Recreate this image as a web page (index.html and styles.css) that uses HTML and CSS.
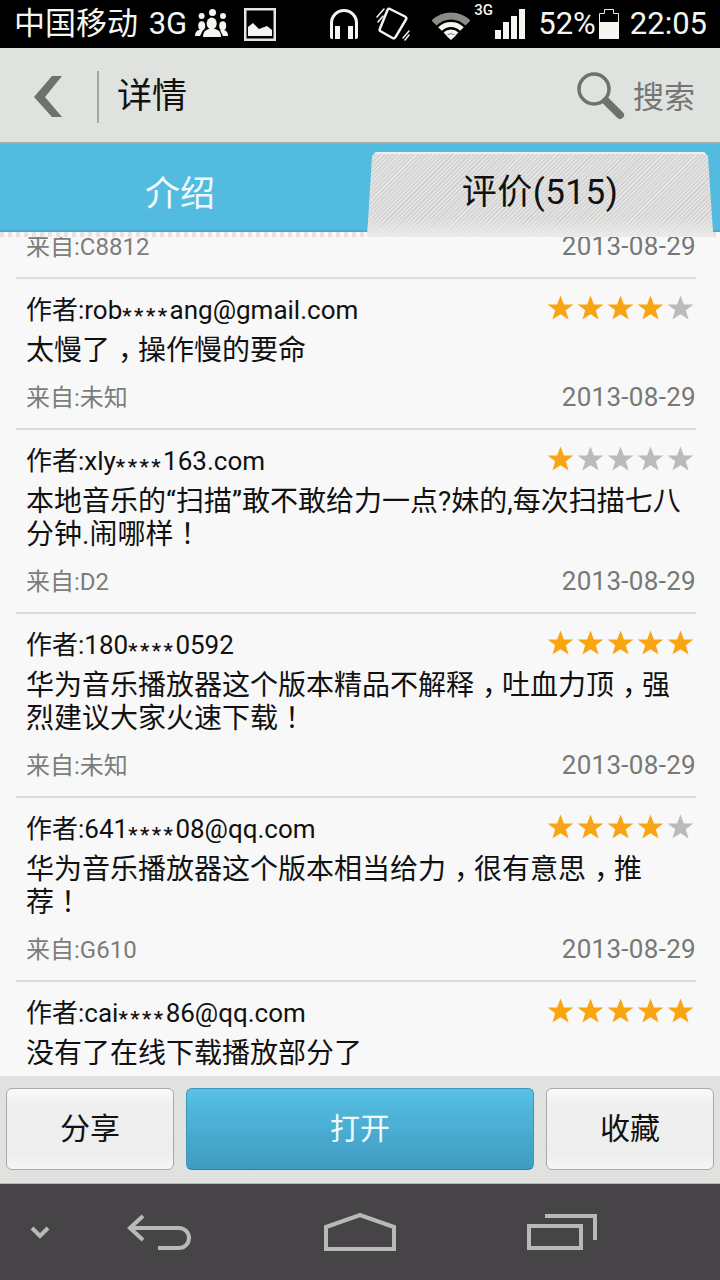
FILE: index.html
```html
<!DOCTYPE html>
<html lang="zh-CN">
<head>
<meta charset="utf-8">
<title>详情</title>
<link rel="stylesheet" href="styles.css">
</head>
<body>
<svg class="defs" width="0" height="0"><defs><symbol id="star" viewBox="0 0 28 28"><path d="M14 1l3.500 9.300h9.900l-7.900 6.100 2.900 9.600L14 20.400 5.600 26l2.900-9.600L.6 10.300h9.900z"/></symbol></defs></svg>
<div class="app">
  <div class="status">
    <div class="status-left">
      <span class="carrier">中国移动 3G</span>
      <svg class="i-people" width="33" height="30" viewBox="0 0 33 30"><g fill="#f4f6f2"><circle cx="17.500" cy="3.500" r="3.500"/><circle cx="6.600" cy="7" r="3"/><circle cx="28" cy="7" r="3"/><ellipse cx="16.700" cy="14.500" rx="5" ry="6"/><path d="M8 28q0-7 6-8h6q6 1 6 8z"/><ellipse cx="6.700" cy="16.700" rx="3.500" ry="4.500"/><ellipse cx="27.700" cy="16.700" rx="3.500" ry="4.500"/><path d="M0 27q0-5 4-6h4l-3 6zM33 27q0-5-4-6h-4l3 6z"/></g></svg>
      <svg class="i-image" width="32" height="33" viewBox="0 0 32 33"><rect x="1.250" y="1.250" width="29.500" height="30.500" fill="none" stroke="#e4e6e2" stroke-width="2.500"/><path d="M4 28v-9l5-4 6 6 8-3 5 4v6z" fill="#f4f6f2"/></svg>
    </div>
    <div class="status-right">
      <svg class="i-head" width="28" height="30" viewBox="0 0 28 30"><path d="M1.500 27V14a12.500 12.500 0 0 1 25 0v13" fill="none" stroke="#f4f6f2" stroke-width="3"/><path d="M0 25h3v5H2q-2 0-2-2zM25 25h3v3q0 2-2 2h-1z" fill="#f4f6f2"/><rect x="5" y="17" width="5" height="13" fill="#f4f6f2"/><rect x="18" y="17" width="5" height="13" fill="#f4f6f2"/></svg>
      <svg class="i-rot" width="34" height="34" viewBox="0 0 34 34"><g fill="none" stroke="#f4f6f2" stroke-linecap="round"><path d="M14 2l15 7.500q2 1 1 3L19.500 30q-1 2-3 1L5 24.500q-2-1-1-3L11.500 3q1-2 2.500-1z" stroke-width="2.500"/><path d="M1 10L8 2M2 15l5-6M33 24l-6 7M33 28l-4 5" stroke-width="1.500"/></g></svg>
      <svg class="i-wifi" width="38" height="28" viewBox="0 0 38 28"><g fill="none" stroke-width="7"><path d="M2 11a24 24 0 0 1 34 0" stroke="#8a8c88"/></g><g fill="none" stroke="#f4f6f2"><path d="M8 17a15.500 15.500 0 0 1 22 0" stroke-width="5"/><path d="M13 22a8.500 8.500 0 0 1 12 0" stroke-width="4"/></g><path d="M19 28l-5-4.500q5-3 10 0z" fill="#f4f6f2"/></svg>
      <span class="net">3G</span>
      <svg class="i-bars" width="30" height="30" viewBox="0 0 30 30"><path d="M0 21h6v9H0zM8 13h6v17H8zM16 7h6v23h-6zM24 0h6v30h-6z" fill="#f4f6f2"/></svg>
      <span class="pct">52%</span>
      <svg class="i-batt" width="20" height="30" viewBox="0 0 20 30"><path d="M5.500.5h9v4h5v25H.5v-25h5z" fill="none" stroke="#e8eae6"/><rect y="13" width="20" height="17" fill="#f4f6f2"/></svg>
      <span class="time">22:05</span>
    </div>
  </div>

  <header class="head">
    <svg class="back" width="28" height="41" viewBox="0 0 28 41"><path d="M28 0H18L0 21l18 20h10L11 21z" fill="#6e716d"/></svg>
    <span class="sep"></span>
    <h1 class="title">详情</h1>
    <div class="search">
      <svg width="49" height="48" viewBox="0 0 49 48"><circle cx="18" cy="17" r="15" fill="none" stroke="#6e716d" stroke-width="3.500"/><path d="M30 29l14 14" stroke="#6e716d" stroke-width="8" stroke-linecap="round"/></svg>
      <span>搜索</span>
    </div>
  </header>

  <nav class="tabs">
    <div class="tab">介绍</div>
    <div class="tab tab-on">评价(515)</div>
  </nav>

  <main class="list">
    <div class="row row-cut">
      <div class="foot"><span>来自:C8812</span><span class="date">2013-08-29</span></div>
    </div>
    <div class="row">
      <div class="top"><span>作者:rob<span class="ast">****</span>ang@gmail.com</span><span class="stars"><svg class="on"><use href="#star"/></svg><svg class="on"><use href="#star"/></svg><svg class="on"><use href="#star"/></svg><svg class="on"><use href="#star"/></svg><svg><use href="#star"/></svg></span></div>
      <p class="txt">太慢了<span class="c">，</span>操作慢的要命</p>
      <div class="foot"><span>来自:未知</span><span class="date">2013-08-29</span></div>
    </div>
    <div class="row">
      <div class="top"><span>作者:xly<span class="ast">****</span>163.com</span><span class="stars"><svg class="on"><use href="#star"/></svg><svg><use href="#star"/></svg><svg><use href="#star"/></svg><svg><use href="#star"/></svg><svg><use href="#star"/></svg></span></div>
      <p class="txt">本地音乐的“扫描”敢不敢给力一点?妹的,每次扫描七八分钟.闹哪样<span class="p" lang="zh-Hant">！</span></p>
      <div class="foot"><span>来自:D2</span><span class="date">2013-08-29</span></div>
    </div>
    <div class="row">
      <div class="top"><span>作者:180<span class="ast">****</span>0592</span><span class="stars"><svg class="on"><use href="#star"/></svg><svg class="on"><use href="#star"/></svg><svg class="on"><use href="#star"/></svg><svg class="on"><use href="#star"/></svg><svg class="on"><use href="#star"/></svg></span></div>
      <p class="txt">华为音乐播放器这个版本精品不解释<span class="c">，</span>吐血力顶<span class="c">，</span>强烈建议大家火速下载<span class="p" lang="zh-Hant">！</span></p>
      <div class="foot"><span>来自:未知</span><span class="date">2013-08-29</span></div>
    </div>
    <div class="row">
      <div class="top"><span>作者:641<span class="ast">****</span>08@qq.com</span><span class="stars"><svg class="on"><use href="#star"/></svg><svg class="on"><use href="#star"/></svg><svg class="on"><use href="#star"/></svg><svg class="on"><use href="#star"/></svg><svg><use href="#star"/></svg></span></div>
      <p class="txt">华为音乐播放器这个版本相当给力<span class="c">，</span>很有意思<span class="c">，</span>推荐<span class="p" lang="zh-Hant">！</span></p>
      <div class="foot"><span>来自:G610</span><span class="date">2013-08-29</span></div>
    </div>
    <div class="row">
      <div class="top"><span>作者:cai<span class="ast">****</span>86@qq.com</span><span class="stars"><svg class="on"><use href="#star"/></svg><svg class="on"><use href="#star"/></svg><svg class="on"><use href="#star"/></svg><svg class="on"><use href="#star"/></svg><svg class="on"><use href="#star"/></svg></span></div>
      <p class="txt">没有了在线下载播放部分了</p>
    </div>
  </main>

  <div class="actions">
    <button class="btn btn-side">分享</button>
    <button class="btn btn-main">打开</button>
    <button class="btn btn-side">收藏</button>
  </div>

  <footer class="nav">
    <svg width="24" height="14" viewBox="0 0 24 14"><path d="M4 3l8 8 8-8" fill="none" stroke="#b9b9b7" stroke-width="4"/></svg>
    <svg width="68" height="36" viewBox="0 0 68 36"><path d="M17 2L4 14l13 12M4 14h49a10 10 0 0 1 0 20H32" fill="none" stroke="#b9b9b7" stroke-width="4"/></svg>
    <svg width="72" height="38" viewBox="0 0 72 38"><path d="M2 36V14L36 2l34 12v22z" fill="none" stroke="#b9b9b7" stroke-width="4"/></svg>
    <svg width="70" height="36" viewBox="0 0 70 36"><path d="M2 12h52v22H2zM18 2h50v24" fill="none" stroke="#b9b9b7" stroke-width="4"/></svg>
  </footer>
</div>
</body>
</html>
```

FILE: styles.css
```css
* { box-sizing: border-box; }
html, body { margin: 0; padding: 0; }
body { font-family: Roboto, "Noto Sans CJK SC", sans-serif; background: #f8f8f8; }
.defs { position: absolute; }
.app { width: 720px; height: 1280px; display: flex; flex-direction: column; overflow: hidden; }

.status { height: 48px; flex: none; background: #000; color: #f4f6f2; display: flex; align-items: center; justify-content: space-between; font-size: 31px; line-height: 36px; }
.status svg { display: block; flex: none; }
.status-left { display: flex; align-items: center; padding-left: 14px; }
.status-right { display: flex; align-items: center; padding-right: 13px; }
.carrier { white-space: nowrap; word-spacing: 3px; }
.i-people { margin-left: 8px; }
.i-image { margin-left: 16px; }
.i-rot { margin-left: 18px; }
.i-wifi { margin-left: 22px; margin-top: 3px; }
.net { font-size: 15px; margin-left: 4px; margin-top: -28px; width: 20px; font-weight: 500; line-height: 18px; }
.i-bars { margin-left: 1px; }
.pct { margin-left: 13px; }
.i-batt { margin-left: 3px; }
.time { margin-left: 11px; }

.head { height: 96px; flex: none; background: #dfe2de; border-bottom: 2px solid #a9aba7; display: flex; align-items: center; padding: 3px 25px 0 34px; }
.back { display: block; }
.sep { width: 2px; height: 52px; background: #a4a7a3; margin-left: 35px; }
.title { font-size: 35px; font-weight: 400; color: #111; margin: 0 0 0 18px; line-height: 1; }
.search { margin-left: auto; display: flex; align-items: center; gap: 8px; color: #737673; font-size: 31px; }
.search svg { display: block; margin-top: -2px; }
.search span { margin-top: -5px; }

.tabs { height: 88px; flex: none; background: #53bbdf; box-shadow: inset 0 -2px 0 #4aa9cc; display: flex; position: relative; z-index: 2; padding: 8px 7px 0 0; }
.tab { color: #f0fafc; font-size: 35px; text-align: center; }
.tab:first-child { flex: 1; margin-top: -8px; padding: 28px 7px 0 0; line-height: 46px; }
.tab-on { width: 346px; height: 85px; color: #111; line-height: 82px; letter-spacing: .5px;
  background: linear-gradient(#eef0ee 0 2px, rgba(238,240,238,0) 2px 78%, rgba(240,241,240,.7)), repeating-linear-gradient(135deg, #e4e4e3 0 1.5px, #d2d3d2 1.5px 3px);
  clip-path: polygon(0 100%, 5px 4px, 9px 0, 337px 0, 341px 4px, 346px 94%, 346px 100%); }

.list { flex: 1; min-height: 0; overflow: hidden; background: #f8f8f8; padding: 0 24px 0 16px; position: relative; }
.list::before { content: ""; position: absolute; left: 0; right: 0; top: 0; height: 5px; z-index: 1; background: repeating-linear-gradient(90deg, #e2e3e1 0 4px, #f8f8f8 4px 8px); }
.row { border-bottom: 2px solid #dcdddc; padding: 0 0 0 10px; width: 680px; }
.row:last-child { border-bottom: 0; }
.row-cut { margin-top: -16px; }
.top { display: flex; justify-content: space-between; align-items: center; height: 55px; font-size: 26px; color: #111; padding: 1px 0 0 0; }
.ast { font-size: 21px; letter-spacing: 2.500px; vertical-align: -4px; line-height: 0; font-weight: 500; }
.stars { display: flex; gap: 3px; margin-right: 2px; margin-top: 2px; }
.stars svg { width: 27px; height: 28px; display: block; fill: #b9bcb8; }
.stars svg.on { fill: #f9a511; }
.txt { margin: 0; font-size: 28px; line-height: 33px; color: #111; width: 660px; }
.p { font-family: "Noto Sans CJK TC", sans-serif; line-height: 0; }
.c { padding-left: 8px; margin-right: -8px; }
.foot { display: flex; justify-content: space-between; align-items: baseline; height: 61px; padding-top: 11px; font-size: 24px; color: #7b7d7b; }
.date { font-size: 26px; color: #767876; letter-spacing: .3px; }

.actions { height: 108px; flex: none; background: #dfe2de; border-bottom: 1px solid #b5b7b4; display: flex; gap: 12px; padding: 12px 6px 0; }
.btn { height: 82px; font-family: inherit; font-size: 30px; padding: 0 0 6px; border-radius: 6px; }
.btn-side { width: 168px; color: #111; border: 1px solid #a9aba7; background: linear-gradient(#f9faf9, #efefef 20%, #eeeeee 80%, #f5f6f4); }
.btn-main { flex: 1; color: #eef9fc; border: 1px solid #3c96bb; border-bottom-color: #2a7ea3; background: linear-gradient(#5cc0e4, #51b8de 20%, #409bc0); }

.nav { height: 96px; flex: none; background: #464447; display: grid; grid-template-columns: 80px 160px 240px 164px 1fr; align-items: center; justify-items: center; }
.nav svg { display: block; }
```
